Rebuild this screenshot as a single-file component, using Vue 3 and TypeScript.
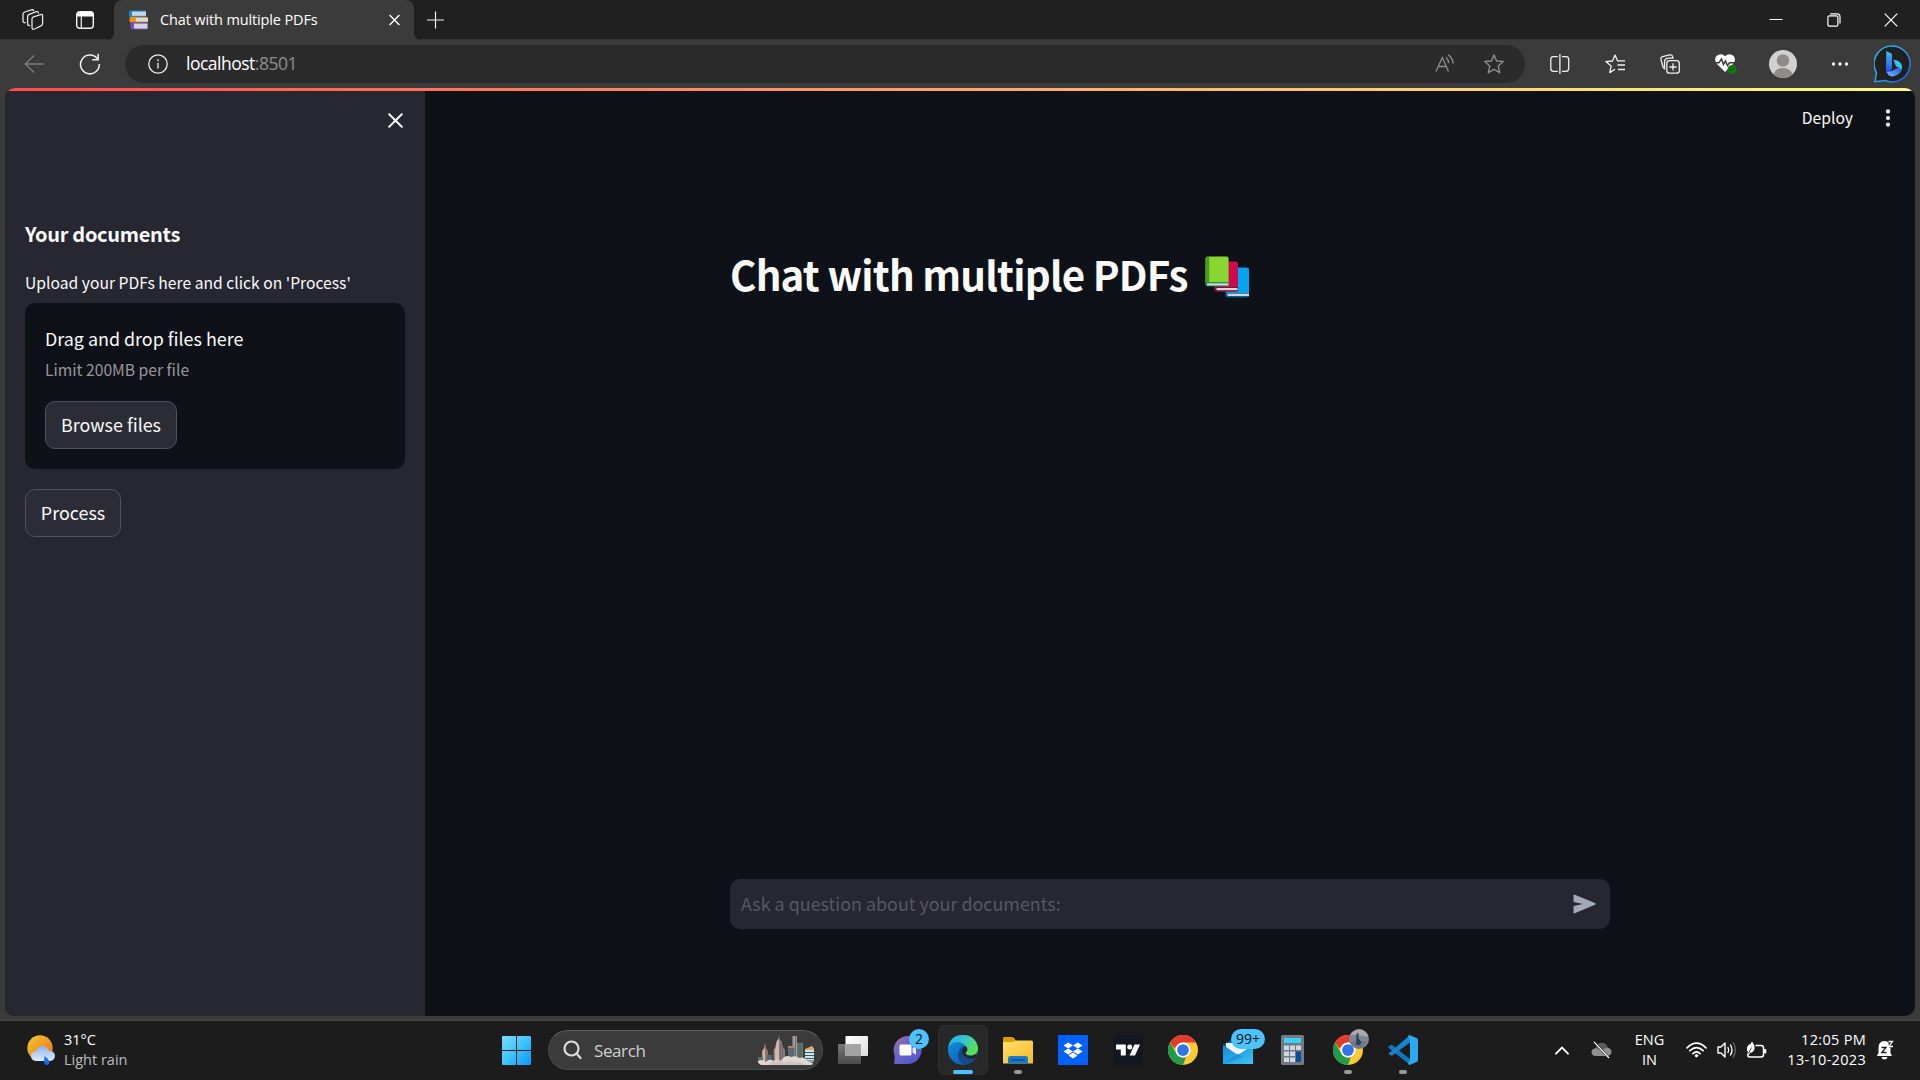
<script setup lang="ts">
import { ref } from 'vue'

const tabTitle = 'Chat with multiple PDFs'
const question = ref('')
</script>

<template>
  <div class="screen">
    <header class="tabstrip">
      <svg class="workspaces" width="22" height="22" viewBox="0 0 22 22" fill="none" stroke="#e6e6e6" stroke-width="1.3" stroke-linejoin="round" stroke-linecap="round">
        <path d="M11.5 7.8 18.6 5.6Q20.6 5 20.6 7V14.6Q20.6 16.2 19 16.9L12.5 20Q10 21 10 18.6V10Q10 8.3 11.5 7.8Z" />
        <path d="M7.6 16.5Q5.6 16.8 5.6 14.8V7.6Q5.6 5.9 7.2 5.3L14.4 2.7Q16.2 2.2 16.5 4" />
        <path d="M3.2 13.7Q1 13.8 1 12V5.3Q1 3.7 2.6 3L9.3.9Q11.2.4 11.6 1.6" />
      </svg>
      <svg class="vertical-tabs" width="18" height="18" viewBox="0 0 18 18">
        <rect x=".7" y=".7" width="16.6" height="16.6" rx="3" fill="none" stroke="#f2f2f2" stroke-width="1.4" />
        <path d="M.7 5.5V3Q.7.7 3 .7H15Q17.3.7 17.3 3V5.5Z" fill="#fff" />
        <path d="M5.3 5V17" stroke="#e6e6e6" stroke-width="1.3" />
      </svg>
      <div class="tab">
        <svg class="favicon" width="20" height="20" viewBox="0 0 20 20">
          <path d="M1 .5H17V7H1Q0 7 0 6V1.5Q0 .5 1 .5Z" fill="#2185d0" />
          <rect x="3" y="1.6" width="14" height="4.2" fill="#c6d5e2" />
          <path d="M2 7H19V12.5H2Q.5 12.5.5 11V8.5Q.5 7 2 7Z" fill="#f59211" />
          <rect x="7" y="8" width="12" height="3.5" fill="#d9dde0" />
          <path d="M3 12.5H18.5V19.5H3Q1.5 19.5 1.5 18V14Q1.5 12.5 3 12.5Z" fill="#7a4cc0" />
          <rect x="5" y="13.6" width="13.5" height="5" fill="#ccd7e2" />
        </svg>
        <span class="tab-title">{{ tabTitle }}</span>
        <svg class="tab-close" width="11" height="12" viewBox="0 0 11 12" stroke="#fff" stroke-width="1.4"><path d="M.6 1 10.4 11M10.4 1 .6 11" /></svg>
      </div>
      <svg class="new-tab" width="18" height="18" viewBox="0 0 18 18" stroke="#f2f2f2" stroke-width="1.2"><path d="M8.5 .5V17.5M0 9H17" /></svg>
      <div class="window-controls">
        <svg width="14" height="14" viewBox="0 0 14 14"><path d="M.5 6.5H13.5" stroke="#fff" stroke-width="1" /></svg>
        <svg width="14" height="14" viewBox="0 0 14 14" fill="none" stroke="#fff" stroke-width="1.2"><rect x=".9" y="2.9" width="10" height="10.3" rx="1.5" /><path d="M3.2.8H10Q13 .8 13 3.8V10.5" /></svg>
        <svg width="14" height="14" viewBox="0 0 14 14" stroke="#fff" stroke-width="1.2"><path d="M.7.7 13.3 13.3M13.3.7.7 13.3" /></svg>
      </div>
    </header>

    <nav class="toolbar">
      <svg class="back" width="21" height="20" viewBox="0 0 21 20" fill="none" stroke="#7b7b7b" stroke-width="1.4"><path d="M10 1.5 1.3 10 10 18.5M1.5 10H20" /></svg>
      <svg class="reload" width="22" height="22" viewBox="0 0 22 22" fill="none" stroke="#f2f2f2" stroke-width="1.5"><path d="M20.3 11A9.4 9.4 0 1 1 18.2 5.5M19.2.8V6.7H13.3" /></svg>
      <div class="address">
        <svg width="20" height="20" viewBox="0 0 20 20" fill="none" stroke="#ececec" stroke-width="1.3"><circle cx="10" cy="10" r="9.2" /><path d="M10 8.8V14.5" /><circle cx="10" cy="6.2" r=".6" fill="#ececec" stroke-width=".7" /></svg>
        <span class="url">localhost<span class="port">:8501</span></span>
        <svg class="read-aloud" width="20" height="20" viewBox="0 0 20 20" fill="none" stroke="#8d8d8d" stroke-width="1.3"><path d="M1 17.5 7.3 3.5 13.5 17.5M3.2 12.5H11.3M11 3.2Q13.3 5.5 13.8 9.2M13.3.9Q17.6 4 18.3 9.6" /></svg>
        <svg class="star" width="20" height="20" viewBox="0 0 20 20" fill="none" stroke="#8d8d8d" stroke-width="1.4" stroke-linejoin="round"><path d="M10 1 12.6 7 19.2 7.5 14.2 12 15.7 18.7 10 15.3 4.3 18.7 5.8 12 .8 7.5 7.4 7Z" /></svg>
      </div>
      <svg class="split" width="20" height="20" viewBox="0 0 20 20" fill="none" stroke="#f0f0f0" stroke-width="1.3"><path d="M7.8 2.7H3.5Q.8 2.7.8 5.4V14.6Q.8 17.3 3.5 17.3H7.8M12 2.7H16Q18.7 2.7 18.7 5.4V14.6Q18.7 17.3 16 17.3H12M9.9 0V20" /></svg>
      <svg class="favorites" width="20" height="20" viewBox="0 0 20 20" fill="none" stroke="#f0f0f0" stroke-width="1.3" stroke-linejoin="round"><path d="M10 15.2 4.8 18.6 6.1 12.1.8 7.6 7.5 7 10 1 12.5 6.8H20M12.5 11H20M13 15.5H20" /></svg>
      <svg class="collections" width="20" height="20" viewBox="0 0 20 20" fill="none" stroke="#f0f0f0" stroke-width="1.3"><rect x="6.8" y="6.7" width="12.5" height="12.5" rx="2.7" /><path d="M13 9.3V16.6M9.4 13H16.6M4.5 14.8Q3 14 2.7 12L1 5.6Q.4 3.4 2.5 2.7L9.7.9Q12 .4 12.6 2.7L13 4.2H8.5Q4.5 4.5 4.5 8.3Z" /></svg>
      <svg class="health" width="22" height="22" viewBox="0 0 22 22"><path d="M10 19 2 11C-1 7.5 0 3.5 3 2Q7-.2 10 3.2 13.3-.2 17.2 2C20.3 3.7 21 8 18 11Z" fill="#fff" /><path d="M0 9.8H4L6.5 6 8.5 11.5 10.5 8 12.5 12.5 14.5 9.8H20" fill="none" stroke="#3b3b3b" stroke-width="1.5" /><circle cx="17" cy="16.5" r="4.5" fill="#107c10" /><path d="M15 16.5 16.4 18 19 15.2" fill="none" stroke="#063f06" stroke-width="1" /></svg>
      <svg class="avatar" width="28" height="28" viewBox="0 0 28 28"><defs><clipPath id="face"><circle cx="14" cy="14" r="14" /></clipPath></defs><g clip-path="url(#face)"><rect width="28" height="28" fill="#d2d0ce" /><circle cx="14" cy="10.5" r="6.2" fill="#8f8b88" /><ellipse cx="14" cy="26" rx="9.7" ry="8" fill="#8f8b88" /></g></svg>
      <svg class="more" width="18" height="4" viewBox="0 0 18 4" fill="#f5f5f5"><circle cx="2.5" cy="2" r="1.7" /><circle cx="9" cy="2" r="1.7" /><circle cx="15.5" cy="2" r="1.7" /></svg>
      <svg class="bing" width="38" height="38" viewBox="0 0 38 38">
        <defs>
          <linearGradient id="ring" x1="0" y1="0" x2="1" y2="1"><stop offset="0" stop-color="#22c8e0" /><stop offset=".5" stop-color="#2f9cf0" /><stop offset="1" stop-color="#1d55df" /></linearGradient>
          <linearGradient id="stem" x1="0" y1="0" x2="0" y2="1"><stop offset="0" stop-color="#3fc0f5" /><stop offset="1" stop-color="#2544ed" /></linearGradient>
          <linearGradient id="leaf" x1="0" y1="1" x2="1" y2="0"><stop offset="0" stop-color="#24a6e9" /><stop offset="1" stop-color="#3ddcf0" /></linearGradient>
          <linearGradient id="foot" x1="0" y1="1" x2="1" y2="0"><stop offset="0" stop-color="#6fc0fa" /><stop offset="1" stop-color="#2347e0" /></linearGradient>
        </defs>
        <path d="M.9 36.8 2.5 28A18 18 0 1 1 11 35.5Z" fill="#202020" stroke="url(#ring)" stroke-width="1.5" stroke-linejoin="round" />
        <path d="M12.3 6 17.3 8.5Q18 9 18 10V24L13 29Q12 28 12 26Z" fill="url(#stem)" />
        <path d="M13 27 18 26 21.5 24 26 21.5Q28.8 22.5 27 26.5 23.5 31 18 31.5 14 31 13 27Z" fill="url(#foot)" />
        <path d="M19.5 14.5Q28 16 28.2 22.2 28 23.5 27 25 26 22.5 22 21.5 20.5 18.5 19.5 14.5Z" fill="url(#leaf)" />
      </svg>
    </nav>

    <section class="viewport">
      <div class="rainbow"></div>
      <div class="columns">
        <aside class="sidebar">
          <div class="sidebar-top">
            <svg width="15" height="15" viewBox="0 0 15 15" stroke="#fafafa" stroke-width="2" stroke-linecap="round"><path d="M1.2 1.2 13.8 13.8M13.8 1.2 1.2 13.8" /></svg>
          </div>
          <h3 class="sidebar-heading">Your documents</h3>
          <label class="upload-label">Upload your PDFs here and click on 'Process'</label>
          <div class="dropzone">
            <div class="drop-title">Drag and drop files here</div>
            <div class="drop-limit">Limit 200MB per file</div>
            <button class="btn browse">Browse files</button>
          </div>
          <button class="btn process">Process</button>
        </aside>
        <main class="main">
          <div class="app-header">
            <span class="deploy">Deploy</span>
            <svg width="6" height="18" viewBox="0 0 6 18" fill="#fafafa"><circle cx="3" cy="2.4" r="2.1" /><circle cx="3" cy="9" r="2.1" /><circle cx="3" cy="15.6" r="2.1" /></svg>
          </div>
          <h1 class="title">
            <span>{{ tabTitle }}</span>
            <svg width="44" height="43" viewBox="0 0 42 43" preserveAspectRatio="none">
              <path d="M20 11.500H40Q42 11.500 42 13.500V41H22Q20 41 20 39Z" fill="#00a4ef" /><path d="M20 37H42V39.500Q42 41.500 40 41.500H22Q19.500 41.500 19.500 39Z" fill="#0b5c92" /><rect x="21.500" y="37.700" width="20.500" height="2.300" fill="#d6d6d6" />
              <path d="M10 5.500H29Q31.500 5.500 31.500 8V35.500H12Q9 35.500 9 33Z" fill="#cd0a4e" /><path d="M9 31H31.500V33.500Q31.500 35.500 29.500 35.500H11.500Q9 35.500 9 33Z" fill="#7f123a" /><rect x="11" y="32" width="20" height="2.200" fill="#d6d6d6" />
              <path d="M3 .5H21Q22.500.5 22.500 2V30H2Q.5 30 .5 28V3Q.5.5 3 .5Z" fill="#86d72f" /><path d="M.5 3Q.5.5 4 .5V27H.5Z" fill="#489a20" /><path d="M.5 26.300H22.500V28Q22.500 30.500 20 30.500H3Q.5 30.500.5 28Z" fill="#087a52" /><rect x="1.800" y="27.300" width="20.500" height="2.200" fill="#d6d6d6" />
            </svg>
          </h1>
          <div class="chat-input">
            <input v-model="question" placeholder="Ask a question about your documents:" />
            <svg width="23" height="20" viewBox="0 0 23 20"><path d="M.5 1.5Q.5.3 1.800.7L22 9.1Q23.3 10 22 10.8L1.800 19.300Q.5 19.700.5 18.400V12L10 10 .5 8Z" fill="#a3a8b8" /></svg>
          </div>
        </main>
      </div>
    </section>

    <footer class="taskbar">
      <div class="weather">
        <svg width="28" height="31" viewBox="0 0 28 31">
          <defs><linearGradient id="sun" x1="0" y1="0" x2="1" y2="1"><stop offset=".1" stop-color="#f0c02f" /><stop offset="1" stop-color="#f26a12" /></linearGradient><linearGradient id="cloud" x1="0" y1="0" x2="0" y2="1"><stop offset="0" stop-color="#8bb4f2" /><stop offset="1" stop-color="#dfe9fc" /></linearGradient></defs>
          <circle cx="13" cy="13" r="12.700" fill="url(#sun)" />
          <path d="M9 26Q4 25.500 4 21 4.500 16.500 9 16.200 11 11 15.500 11 20 11.500 21.500 15.500 28 16 28 21 27.500 25.500 23 26Z" fill="url(#cloud)" />
          <path d="M17.500 21Q23 25 22.500 28 21.500 30.300 19.500 30 17 29.500 17 27Z" fill="#0f6df2" />
        </svg>
        <div class="weather-text"><div>31°C</div><div class="dim">Light rain</div></div>
      </div>
      <svg class="start" width="29" height="29" viewBox=".5 .5 29 29"><defs><linearGradient id="win" gradientUnits="userSpaceOnUse" x1="0" y1="0" x2="30" y2="30"><stop offset="0" stop-color="#7fdcff" /><stop offset=".5" stop-color="#3cc4fb" /><stop offset="1" stop-color="#0a93f6" /></linearGradient></defs><path d="M1.500.5H14.500V14.500H.5V1.500Q.5.5 1.500.5ZM15.500.5H28.500Q29.500.5 29.500 1.500V14.500H15.500ZM.5 15.500H14.500V29.500H1.500Q.5 29.500.5 28.500ZM15.500 15.500H29.500V28.500Q29.500 29.500 28.500 29.500H15.500Z" fill="url(#win)" /></svg>
      <div class="search">
        <svg width="19" height="20" viewBox="0 0 19 20" fill="none" stroke="#dcdcdc" stroke-width="2.200" stroke-linecap="round"><circle cx="8.500" cy="8.500" r="7" /><path d="M13.700 13.700 17.500 18" /></svg>
        <span>Search</span>
        <svg class="skyline" width="59" height="32" viewBox="0 0 59 32">
          <path d="M8 8.500 7 14 5 17V29H11V17L9 14Z" fill="#8f7468" /><path d="M8 10 7.500 14 5.500 17V29H8Z" fill="#d6b5a0" /><rect x="1" y="23" width="5" height="6" fill="#507078" /><rect x="10" y="21" width="5" height="9" fill="#506870" />
          <path d="M22 0 21.500 5 19.500 7.500 18.500 12 16.500 16V30H28V16L25.500 12 24.500 7.500 22.500 5Z" fill="#8f7d7e" /><path d="M21.800 4 19.500 8 19 13 18 16V30H22Z" fill="#d0b8aa" /><path d="M23.500 10V30M25.500 13V30" stroke="#625862" stroke-width=".7" />
          <rect x="35.500" y="2" width="4.500" height="22" fill="#a69aa0" /><path d="M38.500 2V22" stroke="#736873" stroke-width="1" /><rect x="31" y="13" width="6.500" height="13" fill="#576b75" /><rect x="31" y="12" width="6.500" height="2" fill="#a98363" /><rect x="40" y="9" width="6" height="16" fill="#627b6d" /><path d="M42 10V24M44 10V24" stroke="#384d43" stroke-width=".6" />
          <path d="M48 16 55.500 12.500 57 15V28H48Z" fill="#cfe4e4" /><path d="M48 15 55 12 57 16H48Z" fill="#e4a26c" /><path d="M48 18.500H57M48 21.500H57M48 24.500H57M48 27H57" stroke="#31606b" stroke-width="1" />
          <path d="M4 31Q-1 28 2 26.500 5 25 9 28 12 24 17 27 20 24 24 27 28 20 34 23 39 21 42 24 48 22 50 27 54 28 56 29 56 31 54 31Z" fill="#dfd6d0" /><path d="M13 31Q13 27 18 28 24 25 27 29 33 25 38 29 43 26 48 31Z" fill="#c2b7b3" opacity=".55" />
        </svg>
      </div>

      <div class="apps">
        <div class="app"><svg width="30" height="30" viewBox="0 0 30 30"><defs><linearGradient id="tv1" x1="0" y1="0" x2="0" y2="1"><stop stop-color="#777" /><stop offset="1" stop-color="#4b4b4b" /></linearGradient><linearGradient id="tv2" x1="0" y1="0" x2="1" y2="1"><stop stop-color="#fff" /><stop offset="1" stop-color="#dedede" /></linearGradient></defs><rect y="9" width="23" height="20" rx="1" fill="url(#tv1)" /><rect x="7.500" y="1" width="22.500" height="20" rx="1" fill="url(#tv2)" /><rect x="7.500" y="9" width="15.500" height="12" fill="#a3a3a3" /></svg></div>
        <div class="app">
          <svg width="30" height="30" viewBox="0 0 30 30"><defs><linearGradient id="chat" x1="0" y1="0" x2="1" y2="1"><stop offset="0" stop-color="#a06fa8" /><stop offset=".5" stop-color="#6562c9" /><stop offset="1" stop-color="#5055cf" /></linearGradient></defs><path d="M1 29Q2 24 1.500 20A14 14 0 1 1 14 29Z" fill="url(#chat)" /><rect x="6.500" y="9.500" width="12" height="11" rx="1.500" fill="#fff" /><path d="M19.500 13 23 10.500V20L19.500 17.500Z" fill="#e6e2f5" /></svg>
          <span class="badge">2</span>
        </div>
        <div class="app active">
          <svg width="30" height="30" viewBox="0 0 30 30">
            <defs><linearGradient id="e1" x1="0" y1="0" x2="1" y2=".5"><stop offset="0" stop-color="#1eaee8" /><stop offset=".5" stop-color="#35c3d5" /><stop offset="1" stop-color="#5ce04e" /></linearGradient><linearGradient id="e2" x1="0" y1="0" x2=".6" y2="1"><stop offset="0" stop-color="#1698de" /><stop offset="1" stop-color="#0b5bb8" /></linearGradient></defs>
            <circle cx="15" cy="15" r="15" fill="url(#e2)" />
            <path d="M0 13Q2 0 15 0 27 0 30 12 30.500 19 24 20.500 18 21 17.500 18.500 20.500 15.500 18.500 12 15 7 9 7 3 7.500 0 13Z" fill="url(#e1)" />
            <path d="M17.500 18.500Q18.500 21.500 24 20.800 27 20.300 28.500 18.500 29 20.500 27.500 23.500 22 29.500 15.500 29.500 10 26 10 20 10.500 13.500 16 10.500 12.500 15 17.500 18.500Z" fill="#134a8a" />
            <path d="M16 20.800Q11.500 15.500 16.500 11.200 19.800 12 19.300 15 17.300 17.200 17.600 18.700 19.500 21.500 25 20.500L28.500 18.700 27.500 23Q21 25 16 20.800Z" fill="#252525" />
          </svg>
          <i class="indicator wide"></i>
        </div>
        <div class="app"><svg width="30" height="30" viewBox="0 0 30 30"><defs><linearGradient id="fold" x1="0" y1="0" x2="1" y2="1"><stop offset="0" stop-color="#ffe06d" /><stop offset="1" stop-color="#f7b928" /></linearGradient></defs><path d="M0 3Q0 2 1.500 2H9Q10.500 2 11.500 3.500L13 6V12H0Z" fill="#dc9d08" /><path d="M0 7H9Q11 7 12.500 5.500H28.500Q30 5.500 30 7V28.500H0Z" fill="url(#fold)" /><path d="M5 28.500V23.500Q5 21 7.500 21H22.500Q25 21 25 23.500V28.500Z" fill="#1979cc" /><path d="M8 25H22" stroke="#0d4c91" stroke-width="1.500" /></svg><i class="indicator"></i></div>
        <div class="app"><svg width="30" height="30" viewBox="0 0 30 30"><rect width="30" height="30" fill="#0061fe" /><path d="M10.200 7.500 15 10.500 10.200 13.500 5.500 10.500ZM19.800 7.500 24.500 10.500 19.800 13.500 15 10.500ZM10.200 13.500 15 16.500 10.200 19.500 5.500 16.500ZM19.800 13.500 24.500 16.500 19.800 19.500 15 16.500ZM15 17.500 19.500 20.500 15 23.500 10.500 20.500Z" fill="#fff" /></svg></div>
        <div class="app"><svg width="30" height="30" viewBox="0 0 30 30"><rect width="30" height="30" fill="#131722" /><path d="M3 9.500H12.800V20.500H7.800V14.500H3ZM21.500 9.500H27L22 20.500H16.500Z" fill="#fff" /><circle cx="16.700" cy="12" r="2.500" fill="#fff" /></svg></div>
        <div class="app"><svg width="30" height="30" viewBox="0 0 48 48"><circle cx="24" cy="24" r="24" fill="#fcc934" /><path d="M3.200 12A24 24 0 0 1 44.800 12H24A12 12 0 0 0 13.600 18L10 21Z" fill="#e33b2e" /><path d="M3.200 12 13.600 30A12 12 0 0 0 24 36H28.500L24 48A24 24 0 0 1 3.200 12Z" fill="#229a49" /><circle cx="24" cy="24" r="12" fill="#fff" /><circle cx="24" cy="24" r="9.400" fill="#3274e8" /></svg></div>
        <div class="app">
          <svg width="30" height="30" viewBox="0 0 30 30"><defs><linearGradient id="env" x1="0" y1="0" x2="1" y2="1"><stop offset="0" stop-color="#1189d6" /><stop offset="1" stop-color="#3dc5f6" /></linearGradient></defs><path d="M0 10 14 1 30 10V18H0Z" fill="#0c5aa8" /><path d="M3 8H27V16L15 22 3 14Z" fill="#f0f3f7" /><path d="M0 10 15 20 30 10V29H0Z" fill="url(#env)" /><path d="M0 29 15 18.500 20 22Z" fill="#1b86ce" opacity=".6" /></svg>
          <span class="badge many">99+</span>
        </div>
        <div class="app"><svg width="30" height="30" viewBox="0 0 30 30"><rect x="3" width="23" height="30" rx="1.500" fill="#707b86" /><rect x="6" y="3" width="17" height="5" fill="#3fd0f5" /><path d="M6 10.500H11V15H6ZM12 10.500H17V15H12ZM18 10.500H23V15H18ZM6 16.500H11V21H6ZM12 16.500H17V21H12ZM6 22.500H11V27H6ZM12 22.500H17V27H12Z" fill="#cfd6dd" /><rect x="18" y="16.500" width="5" height="10.500" fill="#0e4a94" /></svg></div>
        <div class="app">
          <svg width="30" height="30" viewBox="0 0 48 48"><circle cx="24" cy="24" r="24" fill="#fcc934" /><path d="M3.200 12A24 24 0 0 1 44.800 12H24A12 12 0 0 0 13.600 18L10 21Z" fill="#e33b2e" /><path d="M3.200 12 13.600 30A12 12 0 0 0 24 36H28.500L24 48A24 24 0 0 1 3.200 12Z" fill="#229a49" /><circle cx="24" cy="24" r="12" fill="#fff" /><circle cx="24" cy="24" r="9.400" fill="#3274e8" /></svg>
          <svg class="profile" width="20" height="20" viewBox="0 0 20 20"><circle cx="10" cy="10" r="10" fill="#7f8693" /><path d="M1 6Q5 0 12 .5 19 3 19 8L10 6Z" fill="#aaa8ab" /><path d="M1 13Q7 10 18 13 15 19 10 19.500 4 19 1 13Z" fill="#717780" /><path d="M7.500 4.500 9.500 4 9.500 9.500 12.500 13 11 16H7Z" fill="#24445f" /></svg>
          <i class="indicator"></i>
        </div>
        <div class="app"><svg width="30" height="30" viewBox="0 0 30 30"><path d="M.5 11.500 2.500 10Q3.500 9.400 4.500 10.200L22 24V30L.7 13Q0 12 .5 11.500Z" fill="#1077bd" /><path d="M.5 18.500 22 0 22 7.500 4.500 20.300Q3.500 20.900 2.500 20.200L.7 19Z" fill="#1684cd" /><path d="M21.500 0 28.500 3Q30 3.700 30 5V25Q30 26.300 28.500 27L21.500 30 20 29 22 24V6L20 1Z" fill="#2aa9ef" /></svg><i class="indicator"></i></div>
      </div>

      <div class="tray">
        <svg width="14" height="9" viewBox="0 0 14 9" fill="none" stroke="#fff" stroke-width="1.800" stroke-linecap="round"><path d="M1 7.700 7 1.500 13 7.700" /></svg>
        <svg class="cloud-off" width="21" height="18" viewBox="0 0 21 18"><path d="M5 15Q.5 15 .5 11 1 7.500 5 7 6.500 2 11 2 15.500 2.500 16.500 6.500 20.500 7.500 20.500 11 20 15 16 15Z" fill="#8f8f8f" /><path d="M5 7Q6.500 2 11 2 15.500 2.500 16.500 6.500L10 9Z" fill="#5c5c5c" /><path d="M3 .8 18 17" stroke="#1c1c1c" stroke-width="2.400" /><path d="M3 .8 18 17" stroke="#fff" stroke-width="1.200" /></svg>
        <div class="lang"><div>ENG</div><div>IN</div></div>
        <svg class="wifi" width="21" height="16" viewBox="0 0 21 16" fill="none" stroke="#fff" stroke-width="1.700" stroke-linecap="round"><path d="M1 5.800Q10.500-3.500 20 5.800M3.900 8.700Q10.500 2.500 17.100 8.700M6.900 11.600Q10.500 8 14.100 11.600" /><circle cx="10.500" cy="13.700" r="1.200" fill="#fff" stroke-width="1" /></svg>
        <svg class="volume" width="21" height="18" viewBox="0 0 21 18" fill="none" stroke="#fff" stroke-width="1.400" stroke-linecap="round" stroke-linejoin="round"><path d="M1 6H4L8 2V16L4 12H1ZM11 6.500Q12.500 9 11 11.500M13.500 4Q16.500 9 13.500 14" /><path d="M16.300 2Q20.500 9 16.300 16" stroke="#666" /></svg>
        <svg class="battery" width="21" height="18" viewBox="0 0 21 18"><path d="M9.500 4.500H15Q17.500 4.500 17.500 7V13.500Q17.500 16 15 16H4Q2.500 16 1.500 14.500" fill="none" stroke="#fff" stroke-width="1.500" /><rect x="18" y="8" width="2.300" height="4.500" rx="1" fill="#fff" /><path d="M6 .5Q9 4 8.500 8 7.500 11.500 4 12L2 15 .8 14 2 11.500Q-.5 7 2.500 4 5 3 6 .5Z" fill="#fff" /><path d="M2.500 12.500 5.500 6.500" stroke="#1c1c1c" stroke-width=".8" /></svg>
        <div class="clock"><div>12:05 PM</div><div>13-10-2023</div></div>
        <svg class="bell" width="18" height="20" viewBox="0 0 18 20"><path d="M2.500 8Q2.500 1 8.500 1 14.500 1 14.500 8V13L16 16H.8L2.500 13Z" fill="#fff" /><path d="M5.500 17H11.500Q11 19.500 8.500 19.500 6 19.500 5.500 17Z" fill="#fff" /><path d="M5.500 7.500H10L5.800 12.500H10.500" fill="none" stroke="#1c1c1c" stroke-width="1.300" /><path d="M12.300 0H18V7.500H13Z" fill="#1c1c1c" /><path d="M12.500 1.500H16.500L13 6.500H17" fill="none" stroke="#fff" stroke-width="1.300" /></svg>
      </div>
    </footer>
  </div>
</template>

<style>
html,
body {
  margin: 0;
  background: #1c1c1c;
  overflow: hidden;
}
</style>

<style scoped>
.screen {
  display: flex;
  flex-direction: column;
  width: 1920px;
  height: 1080px;
  overflow: hidden;
  background: #3b3b3b;
  color: #fff;
  font-family: 'Open Sans', 'Noto Sans', sans-serif;
}
.screen * {
  box-sizing: border-box;
}
svg {
  display: block;
  flex: none;
}
.tabstrip {
  display: flex;
  align-items: center;
  height: 40px;
  flex: none;
  background: #202020;
  border-bottom: 1px solid #363636;
}
.workspaces { margin-left: 21.5px; }
.vertical-tabs { margin-left: 32.5px; }
.tab {
  position: relative;
  display: flex;
  align-items: center;
  align-self: flex-start;
  width: 300px;
  height: 40px;
  flex: none;
  margin-left: 20px;
  background: #3b3b3b;
  border-radius: 8px 8px 0 0;
}
.tab::before,
.tab::after {
  content: '';
  position: absolute;
  bottom: 0;
  width: 6px;
  height: 6px;
}
.tab::before {
  left: -6px;
  background: radial-gradient(circle at 0 0, #202020 5.5px, #3b3b3b 6px);
}
.tab::after {
  right: -6px;
  background: radial-gradient(circle at 100% 0, #202020 5.5px, #3b3b3b 6px);
}
.favicon { margin-left: 15px; }
.tab-title {
  width: 170px;
  margin-left: 11px;
  padding-bottom: 2px;
  font-size: 14.5px;
  letter-spacing: -0.13px;
  white-space: nowrap;
}
.tab-close { margin-left: 59px; }
.new-tab { margin-left: 13px; }
.window-controls {
  display: flex;
  gap: 43.5px;
  margin-left: auto;
  margin-right: 22px;
}
.toolbar {
  display: flex;
  align-items: center;
  height: 48px;
  flex: none;
}
.back { margin-left: 24px; }
.reload { margin-left: 34px; }
.address {
  display: flex;
  align-items: center;
  width: 1400px;
  height: 38px;
  flex: none;
  margin-left: 24px;
  padding: 0 21px 0 22.5px;
  border-radius: 19px;
  background: #2b2b2b;
}
.url {
  margin-left: 18.5px;
  padding-bottom: 2px;
  font-size: 17.5px;
  letter-spacing: -0.5px;
}
.port { color: #8f8f8f; }
.read-aloud { margin-left: auto; }
.star { margin-left: 29px; }
.split { margin-left: 24.5px; }
.favorites { margin-left: 35.5px; }
.collections { margin-left: 35px; }
.health { margin-left: 35px; }
.avatar { margin-left: 32px; }
.more { margin-left: 34px; }
.bing { margin-left: 25px; }
.viewport {
  display: flex;
  flex-direction: column;
  height: 928px;
  flex: none;
  margin: 0 5px;
  border-radius: 10px;
  overflow: hidden;
  background: #0e1117;
  font-family: 'Noto Sans CJK SC', 'Noto Sans', sans-serif;
  color: #fafafa;
}
.rainbow {
  height: 3px;
  flex: none;
  background: linear-gradient(90deg, #ff4b4b, #fffd80);
}
.columns {
  display: flex;
  flex: 1;
  min-height: 0;
}
.sidebar {
  display: flex;
  flex-direction: column;
  align-items: flex-start;
  width: 420px;
  flex: none;
  padding: 22px 20px 0;
  background: #262730;
}
.sidebar-top {
  display: flex;
  justify-content: flex-end;
  width: 100%;
  height: 106px;
  padding-right: 2px;
}
.sidebar-heading {
  margin: 0;
  height: 30px;
  line-height: 30px;
  font-size: 20px;
  font-weight: 700;
  letter-spacing: -0.32px;
  white-space: nowrap;
}
.upload-label {
  height: 24px;
  margin-top: 22px;
  line-height: 24px;
  font-size: 15.67px;
  letter-spacing: 0.01px;
  white-space: nowrap;
}
.dropzone {
  display: flex;
  flex-direction: column;
  align-items: flex-start;
  width: 380px;
  height: 166px;
  margin-top: 8px;
  padding: 19px 20px 20px;
  border-radius: 10px;
  background: #0e1117;
}
.drop-title {
  height: 32px;
  line-height: 32px;
  font-size: 17.9px;
}
.drop-limit {
  height: 28px;
  margin-top: 2px;
  line-height: 28px;
  font-size: 15.67px;
  color: #96979b;
}
.btn {
  display: flex;
  align-items: center;
  justify-content: center;
  height: 48px;
  padding: 0 0 2px;
  border: 1px solid #51525a;
  border-radius: 10px;
  background: #2b2c36;
  color: #fafafa;
  font-family: inherit;
  font-size: 17.9px;
}
.browse {
  width: 132px;
  margin-top: 17px;
}
.process {
  width: 96px;
  margin-top: 20px;
}
.main {
  display: flex;
  flex-direction: column;
  flex: 1;
  align-items: center;
}
.app-header {
  display: flex;
  justify-content: flex-end;
  align-items: center;
  gap: 31.5px;
  width: 100%;
  height: 54px;
  padding-right: 24.5px;
}
.deploy {
  padding-bottom: 2px;
  font-size: 15.67px;
}
.title {
  display: flex;
  align-items: center;
  width: 880px;
  height: 60px;
  margin: 101px 0 0;
  line-height: 60px;
  font-size: 40.3px;
  font-weight: 700;
  letter-spacing: -0.8px;
  white-space: nowrap;
}
.title span { padding-bottom: 4px; }
.title svg {
  margin-top: 2px;
  margin-left: 17px;
}
.chat-input {
  display: flex;
  align-items: center;
  justify-content: space-between;
  width: 880px;
  height: 50px;
  margin-top: 573px;
  padding: 0 14px 0 11px;
  border-radius: 10px;
  background: #262730;
}
.chat-input input {
  width: 700px;
  padding: 0 0 2px;
  border: 0;
  outline: 0;
  background: none;
  color: #fafafa;
  font-family: inherit;
  font-size: 17.9px;
}
.chat-input input::placeholder {
  color: #555866;
  opacity: 1;
}
.taskbar {
  display: flex;
  align-items: center;
  height: 60px;
  flex: none;
  margin-top: 4px;
  padding-bottom: 1px;
  border-top: 1px solid #484848;
  background: #1c1c1c;
}
.weather {
  display: flex;
  align-items: center;
  width: 475px;
  flex: none;
  padding-left: 27px;
}
.weather-text {
  margin-left: 9px;
  padding-bottom: 1px;
  font-size: 14.5px;
  line-height: 20px;
}
.dim { color: #bdbdbd; }
.start {
  margin-top: 1px;
  margin-left: 27px;
}
.search {
  display: flex;
  align-items: center;
  width: 275px;
  height: 40px;
  flex: none;
  margin-left: 17px;
  padding: 0 6px 0 13.5px;
  border: 1px solid #4a4a4a;
  border-top-color: #606060;
  border-radius: 20px;
  background: #3b3b3b;
  color: #cfcfcf;
  font-size: 17px;
  letter-spacing: -0.4px;
}
.search span { margin-left: 12.5px; }
.skyline { margin-left: auto; }
.apps {
  display: flex;
  margin-left: 5px;
}
.app {
  position: relative;
  display: flex;
  align-items: center;
  justify-content: center;
  width: 50px;
  height: 50px;
  margin-right: 5px;
}
.active {
  border: 1px solid #303030;
  border-radius: 6px;
  background: #282828;
}
.indicator {
  position: absolute;
  bottom: 1px;
  left: 21px;
  width: 8px;
  height: 4px;
  border-radius: 2px;
  background: #999;
}
.indicator.wide {
  bottom: 0;
  left: 14px;
  width: 20px;
  background: #4cc2ff;
}
.badge {
  position: absolute;
  top: 4px;
  right: 4px;
  width: 20px;
  height: 20px;
  border-radius: 10px;
  background: #4cc2ff;
  color: #111;
  font-size: 14px;
  line-height: 19px;
  text-align: center;
}
.badge.many {
  right: -2px;
  width: 34px;
}
.profile {
  position: absolute;
  top: 4px;
  right: 4px;
}
.tray {
  display: flex;
  align-items: center;
  flex: none;
  margin-left: auto;
  margin-right: 26px;
  font-size: 14.5px;
  line-height: 20px;
}
.cloud-off { margin-left: 22px; }
.lang {
  width: 30px;
  margin-left: 22.5px;
  text-align: center;
}
.wifi { margin-left: 21.5px; }
.volume { margin-left: 9.5px; }
.battery { margin-left: 8.5px; }
.clock {
  width: 84px;
  margin-left: 15px;
  padding-bottom: 1px;
  text-align: right;
  letter-spacing: 0.3px;
}
.bell { margin-left: 10px; }
</style>
